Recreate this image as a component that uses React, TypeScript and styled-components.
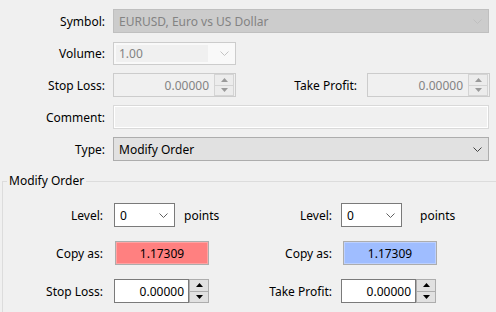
import styled, { createGlobalStyle } from 'styled-components';

const Global = createGlobalStyle`
  html, body {
    margin: 0;
    padding: 0;
    background: #f0f0f0;
    overflow: hidden;
  }
  body {
    font-family: 'Segoe UI', 'Noto Sans', sans-serif;
    font-size: 12px;
    color: #000;
  }
`;

const Page = styled.div`
  width: 496px;
  height: 312px;
  padding-top: 9px;
  box-sizing: border-box;
`;

const Row = styled.div<{ $mb?: number }>`
  display: flex;
  align-items: center;
  height: 24px;
  margin-bottom: ${(p) => p.$mb ?? 8}px;
`;

const Label = styled.span<{ $w: number; $gap: number }>`
  flex-shrink: 0;
  width: ${(p) => p.$w}px;
  margin-right: ${(p) => p.$gap}px;
  text-align: right;
  white-space: nowrap;
`;

type Look = 'locked' | 'faded' | 'flat' | 'white';

const looks = {
  locked: { bg: '#cccccc', border: '#bfbfbf', color: '#838383', arrow: '#bfbfbf' },
  faded: { bg: '#f9f9f9', border: '#cccccc', color: '#838383', arrow: '#c4c4c4' },
  flat: { bg: '#e1e1e1', border: '#adadad', color: '#000', arrow: '#444' },
  white: { bg: '#ffffff', border: '#7a7a7a', color: '#000', arrow: '#606060' },
};

const Select = styled.div<{ $w: number; $look: Look; $h?: number }>`
  display: flex;
  align-items: center;
  box-sizing: border-box;
  width: ${(p) => p.$w}px;
  height: ${(p) => p.$h ?? 24}px;
  padding: 0 6px 0 5px;
  border: 1px solid ${(p) => looks[p.$look].border};
  background: ${(p) => looks[p.$look].bg};
  color: ${(p) => looks[p.$look].color};
  flex-shrink: 0;
`;

const SelectText = styled.span<{ $inset?: boolean }>`
  flex: 1;
  align-self: stretch;
  display: flex;
  align-items: center;
  ${(p) =>
    p.$inset &&
    `
    margin: 2px 12px 2px -3px;
    padding-left: 3px;
    background: #f0f0f0;
  `}
`;

const Chevron = ({ color }: { color: string }) => (
  <svg width="9" height="5" viewBox="0 0 9 5">
    <polyline points="0.5,0.5 4.5,4.5 8.5,0.5" fill="none" stroke={color} strokeWidth="1" />
  </svg>
);

const Edit = styled.div<{ $w: number; $locked?: boolean }>`
  display: flex;
  align-items: center;
  justify-content: flex-end;
  box-sizing: border-box;
  width: ${(p) => p.$w}px;
  height: 24px;
  padding-right: 4px;
  border: 1px solid ${(p) => (p.$locked ? '#cccccc' : '#7a7a7a')};
  background: ${(p) => (p.$locked ? '#f0f0f0' : '#ffffff')};
  color: ${(p) => (p.$locked ? '#838383' : '#000')};
  flex-shrink: 0;
`;

const EditValue = styled.span`
  flex: 1;
  text-align: right;
  padding-right: 5px;
`;

const Spinner = styled.div<{ $inner?: boolean }>`
  display: flex;
  flex-direction: column;
  box-sizing: border-box;
  width: 20px;
  height: ${(p) => (p.$inner ? 22 : 24)}px;
  margin-right: ${(p) => (p.$inner ? -3 : 0)}px;
  border: 1px solid ${(p) => (p.$inner ? '#d4d4d4' : '#adadad')};
  background: ${(p) => (p.$inner ? '#ececec' : '#e1e1e1')};
  flex-shrink: 0;
`;

const SpinButton = styled.div<{ $inner?: boolean; $top?: boolean }>`
  flex: 1;
  display: flex;
  align-items: center;
  justify-content: center;
  border-bottom: ${(p) => (p.$top ? `1px solid ${p.$inner ? '#d4d4d4' : '#adadad'}` : 'none')};
`;

const Triangle = ({ up, color }: { up?: boolean; color: string }) => (
  <svg width="7" height="4" viewBox="0 0 7 4">
    <polygon points={up ? '0,4 3.5,0 7,4' : '0,0 3.5,4 7,0'} fill={color} />
  </svg>
);

const Spin = ({ inner }: { inner?: boolean }) => {
  const c = inner ? '#9a9a9a' : '#000';
  return (
    <Spinner $inner={inner}>
      <SpinButton $inner={inner} $top>
        <Triangle up color={c} />
      </SpinButton>
      <SpinButton $inner={inner}>
        <Triangle color={c} />
      </SpinButton>
    </Spinner>
  );
};

const Comment = styled.div`
  box-sizing: border-box;
  width: 376px;
  height: 24px;
  border: 1px solid #d9d9d9;
  box-shadow: inset 0 0 0 1px #ffffff;
  background: #f0f0f0;
`;

const Group = styled.fieldset`
  margin: 0 -10px 0 2px;
  padding: 0;
  border: 1px solid #dcdcdc;
  border-right: none;
  border-bottom: none;
  min-width: 0;
`;

const Legend = styled.legend`
  margin-left: 4px;
  padding: 0 2px;
  line-height: 16px;
`;

const GroupBody = styled.div`
  padding-top: 14px;
`;

const Half = styled.div<{ $w?: number }>`
  display: flex;
  align-items: center;
  width: ${(p) => (p.$w ? `${p.$w}px` : 'auto')};
  flex-shrink: 0;
`;

const Units = styled.span<{ $gap: number }>`
  margin-left: ${(p) => p.$gap}px;
`;

const CopyButton = styled.div<{ $color: string; $edge: string; $ml: number }>`
  display: flex;
  align-items: center;
  justify-content: center;
  box-sizing: border-box;
  width: 94px;
  height: 24px;
  margin-left: ${(p) => p.$ml}px;
  border: 1px solid #adadad;
  box-shadow: inset 0 0 0 1px ${(p) => p.$edge};
  background: ${(p) => p.$color};
`;

export default function App() {
  return (
    <Page>
      <Global />
      <Row>
        <Label $w={105} $gap={8}>Symbol:</Label>
        <Select $w={376} $look="locked">
          <SelectText>EURUSD, Euro vs US Dollar</SelectText>
          <Chevron color={looks.locked.arrow} />
        </Select>
      </Row>
      <Row>
        <Label $w={105} $gap={8}>Volume:</Label>
        <Select $w={123} $look="faded" $h={23}>
          <SelectText $inset>1.00</SelectText>
          <Chevron color={looks.faded.arrow} />
        </Select>
      </Row>
      <Row>
        <Label $w={105} $gap={8}>Stop Loss:</Label>
        <Edit $w={123} $locked>
          <EditValue>0.00000</EditValue>
          <Spin inner />
        </Edit>
        <Label $w={121} $gap={10}>Take Profit:</Label>
        <Edit $w={123} $locked>
          <EditValue>0.00000</EditValue>
          <Spin inner />
        </Edit>
      </Row>
      <Row>
        <Label $w={105} $gap={8}>Comment:</Label>
        <Comment />
      </Row>
      <Row $mb={12}>
        <Label $w={105} $gap={8}>Type:</Label>
        <Select $w={376} $look="flat">
          <SelectText>Modify Order</SelectText>
          <Chevron color={looks.flat.arrow} />
        </Select>
      </Row>
      <Group>
        <Legend>Modify Order</Legend>
        <GroupBody>
          <Row $mb={14}>
            <Half $w={237}>
              <Label $w={100} $gap={11}>Level:</Label>
              <Select $w={61} $look="white">
                <SelectText>0</SelectText>
                <Chevron color={looks.white.arrow} />
              </Select>
              <Units $gap={9}>points</Units>
            </Half>
            <Half>
              <Label $w={92} $gap={9}>Level:</Label>
              <Select $w={61} $look="white">
                <SelectText>0</SelectText>
                <Chevron color={looks.white.arrow} />
              </Select>
              <Units $gap={18}>points</Units>
            </Half>
          </Row>
          <Row $mb={14}>
            <Half $w={237}>
              <Label $w={100} $gap={11}>Copy as:</Label>
              <CopyButton $color="#ff8080" $edge="#ffa3a3" $ml={1}>1.17309</CopyButton>
            </Half>
            <Half>
              <Label $w={92} $gap={9}>Copy as:</Label>
              <CopyButton $color="#9fbdff" $edge="#bcd0ff" $ml={2}>1.17309</CopyButton>
            </Half>
          </Row>
          <Row $mb={14}>
            <Half $w={237}>
              <Label $w={100} $gap={11}>Stop Loss:</Label>
              <Edit $w={75}>0.00000</Edit>
              <Spin />
            </Half>
            <Half>
              <Label $w={92} $gap={9}>Take Profit:</Label>
              <Edit $w={75}>0.00000</Edit>
              <Spin />
            </Half>
          </Row>
        </GroupBody>
      </Group>
    </Page>
  );
}
